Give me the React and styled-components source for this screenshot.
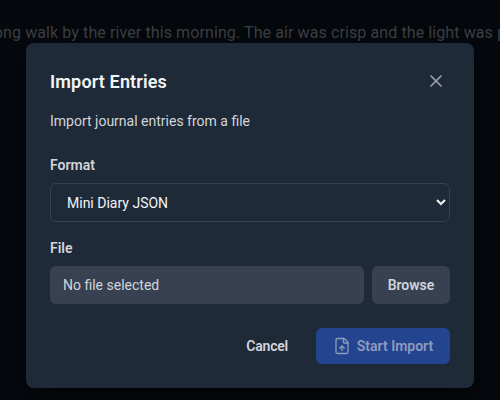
import React from "react";
import styled, { createGlobalStyle } from "styled-components";
import { X, FileUp } from "lucide-react";

const Global = createGlobalStyle`
  html, body { margin: 0; padding: 0; width: 500px; height: 400px; overflow: hidden; background: #06090f; }
  * { box-sizing: border-box; }
  body { font-family: Roboto, "Noto Sans", sans-serif; }
`;

const Page = styled.div`
  position: relative;
  width: 500px;
  height: 400px;
  overflow: hidden;
  background: #05080d;
`;

const EntryText = styled.p`
  margin: 0;
  padding-top: 21px;
  margin-left: -23px;
  width: 560px;
  overflow: hidden;
  white-space: nowrap;
  font-size: 16px;
  letter-spacing: 0.1px;
  line-height: 24px;
  color: #3c4043;
`;

const Overlay = styled.div`
  position: absolute;
  inset: 0;
  display: flex;
  align-items: flex-start;
  justify-content: center;
  padding-top: 43px;
`;

const Modal = styled.section`
  width: 448px;
  height: 345px;
  padding: 24px;
  border-radius: 8px;
  background: #1f2a38;
  box-shadow: 0 10px 25px rgba(0, 0, 0, 0.5);
  display: flex;
  flex-direction: column;
`;

const Header = styled.header`
  display: flex;
  align-items: center;
  justify-content: space-between;
  height: 30px;
`;

const Title = styled.h2`
  margin: 0;
  font-size: 18px;
  letter-spacing: 0.15px;
  line-height: 28px;
  font-weight: 600;
  color: #f3f4f6;
`;

const CloseButton = styled.button`
  display: flex;
  padding: 0;
  margin-right: 4px;
  margin-top: -2px;
  border: 0;
  background: none;
  color: #9ca3af;
`;

const Description = styled.p`
  margin: 14px 0 0;
  font-size: 14px;
  line-height: 20px;
  color: #d1d5db;
`;

const Label = styled.label`
  display: block;
  font-size: 14px;
  line-height: 20px;
  font-weight: 600;
  color: #d1d5db;
  margin-top: ${(p) => p.$top}px;
  margin-bottom: ${(p) => p.$bottom}px;
`;

const FormatSelect = styled.select`
  display: block;
  width: 400px;
  height: 39px;
  padding: 0 8px 0 12px;
  border: 1px solid #374151;
  border-radius: 6px;
  background: #1f2a38;
  color: #f3f4f6;
  font: inherit;
  font-size: 14px;
`;

const FileRow = styled.div`
  display: flex;
  gap: 8px;
`;

const FileName = styled.div`
  flex: 1;
  height: 38px;
  padding: 0 13px;
  display: flex;
  align-items: center;
  border-radius: 6px;
  background: #374151;
  color: #d1d5db;
  font-size: 14px;
`;

const BrowseButton = styled.button`
  width: 78px;
  height: 38px;
  padding: 0;
  border: 0;
  border-radius: 6px;
  background: #374151;
  color: #d1d5db;
  font: inherit;
  font-size: 14px;
  font-weight: 600;
`;

const Footer = styled.footer`
  display: flex;
  justify-content: flex-end;
  align-items: center;
  gap: 12px;
  margin-top: 24px;
`;

const CancelButton = styled.button`
  height: 36px;
  padding: 0 16px;
  border: 0;
  background: none;
  color: #d1d5db;
  font: inherit;
  font-size: 14px;
  font-weight: 600;
  letter-spacing: -0.2px;
`;

const ImportButton = styled.button`
  width: 134px;
  height: 36px;
  padding: 0;
  display: flex;
  align-items: center;
  justify-content: center;
  gap: 6px;
  border: 0;
  border-radius: 6px;
  background: #23448f;
  color: #8e9cbd;
  font: inherit;
  font-size: 14px;
  font-weight: 600;
`;

export default function App() {
  return (
    <Page>
      <Global />
      <EntryText>
        a long walk by the river this morning. The air was crisp and the light was perfect.
      </EntryText>
      <Overlay>
        <Modal>
          <Header>
            <Title>Import Entries</Title>
            <CloseButton aria-label="Close">
              <X size={20} strokeWidth={2} />
            </CloseButton>
          </Header>
          <Description>Import journal entries from a file</Description>
          <Label $top={24} $bottom={8}>Format</Label>
          <FormatSelect defaultValue="mini">
            <option value="mini">Mini Diary JSON</option>
          </FormatSelect>
          <Label $top={16} $bottom={8}>File</Label>
          <FileRow>
            <FileName>No file selected</FileName>
            <BrowseButton>Browse</BrowseButton>
          </FileRow>
          <Footer>
            <CancelButton>Cancel</CancelButton>
            <ImportButton>
              <FileUp size={18} strokeWidth={1.75} />
              Start Import
            </ImportButton>
          </Footer>
        </Modal>
      </Overlay>
    </Page>
  );
}
